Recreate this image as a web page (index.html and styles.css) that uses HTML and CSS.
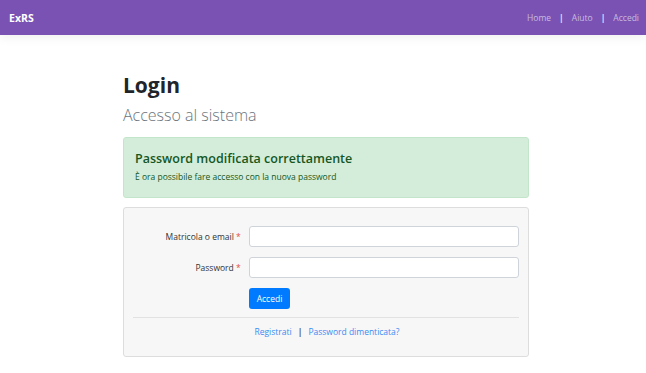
FILE: index.html
```html
<!DOCTYPE html>
<html lang="it">
<head>
<meta charset="utf-8">
<title>Login - ExRS</title>
<link rel="stylesheet" href="styles.css">
</head>
<body>
<nav class="navbar">
  <a class="brand" href="#">ExRS</a>
  <ul class="nav-links">
    <li><a href="#">Home</a></li>
    <li class="sep">|</li>
    <li><a href="#">Aiuto</a></li>
    <li class="sep">|</li>
    <li><a href="#">Accedi</a></li>
  </ul>
</nav>
<main class="container">
  <h1 class="title">Login</h1>
  <p class="lead">Accesso al sistema</p>
  <div class="alert">
    <h4 class="alert-title">Password modificata correttamente</h4>
    <p class="alert-text">È ora possibile fare accesso con la nuova password</p>
  </div>
  <div class="card">
    <form class="form">
      <div class="row">
        <label class="label" for="user">Matricola o email <span class="req">*</span></label>
        <input class="input" id="user" type="text">
      </div>
      <div class="row">
        <label class="label" for="pwd">Password <span class="req">*</span></label>
        <input class="input" id="pwd" type="password">
      </div>
      <div class="row">
        <span class="label"></span>
        <button class="btn" type="button">Accedi</button>
      </div>
    </form>
    <hr class="divider">
    <div class="card-footer">
      <a href="#">Registrati</a>
      <span class="sep">|</span>
      <a href="#">Password dimenticata?</a>
    </div>
  </div>
</main>
</body>
</html>
```
FILE: styles.css
```css
* { box-sizing: border-box; }
html, body { margin: 0; padding: 0; }
body {
  font-family: "Open Sans", "Noto Sans", sans-serif;
  background: #ffffff;
  color: #212529;
}
a { text-decoration: none; }

.navbar {
  height: 35px;
  background: #7952b3;
  display: flex;
  align-items: center;
  justify-content: space-between;
  padding: 0 7px 0 9px;
  box-shadow: 0 3px 10px rgba(0, 0, 0, 0.06);
  position: relative;
}
.brand {
  color: #ffffff;
  font-weight: 700;
  font-size: 10.5px;
}
.nav-links {
  list-style: none;
  margin: 0;
  padding: 0;
  display: flex;
  align-items: center;
  gap: 8px;
  font-size: 8.5px;
}
.nav-links a { color: rgba(255, 255, 255, 0.6); }
.nav-links .sep { color: #dde6ff; font-weight: 700; }

.container {
  width: 412px;
  margin: 0 auto;
  padding-left: 6px;
}
.title {
  margin: 36px 0 0;
  font-size: 21px;
  font-weight: 700;
  line-height: 28px;
  color: #212529;
}
.lead {
  margin: 5px 0 0;
  font-size: 16px;
  font-weight: 300;
  line-height: 22px;
  color: #6c757d;
}
.alert {
  margin-top: 11px;
  background: #d4edda;
  border: 1px solid #c3e6cb;
  border-radius: 3px;
  color: #155724;
  padding: 12px 11px 14px;
  height: 61px;
}
.alert-title {
  margin: 0;
  font-size: 12.5px;
  font-weight: 600;
  line-height: 18px;
}
.alert-text {
  margin: 3px 0 0;
  font-size: 8.5px;
  line-height: 12px;
}
.card {
  margin-top: 9px;
  background: #f7f7f7;
  border: 1px solid #dddddd;
  border-radius: 3px;
  padding: 18px 9px 14px;
  height: 150px;
}
.form {
  display: flex;
  flex-direction: column;
  gap: 10px;
}
.row {
  display: flex;
  align-items: center;
  gap: 8px;
}
.label {
  width: 108px;
  text-align: right;
  font-size: 8.5px;
  color: #333333;
}
.req { color: #e74c3c; }
.input {
  width: 271px;
  height: 21px;
  border: 1px solid #ced4da;
  border-radius: 3px;
  background: #ffffff;
  margin: 0;
}
.btn {
  height: 21px;
  width: 41px;
  padding: 0;
  border: 0;
  border-radius: 3px;
  background: #007bff;
  color: #ffffff;
  font-family: inherit;
  font-size: 8.5px;
}
.divider {
  margin: 8px 0 0;
  border: 0;
  border-top: 1px solid #e2e2e2;
}
.card-footer {
  margin-top: 8px;
  display: flex;
  justify-content: center;
  gap: 6px;
  font-size: 8.5px;
  padding-left: 2px;
}
.card-footer a { color: #3b8bf5; }
.card-footer .sep { color: #555555; font-weight: 700; }
```
